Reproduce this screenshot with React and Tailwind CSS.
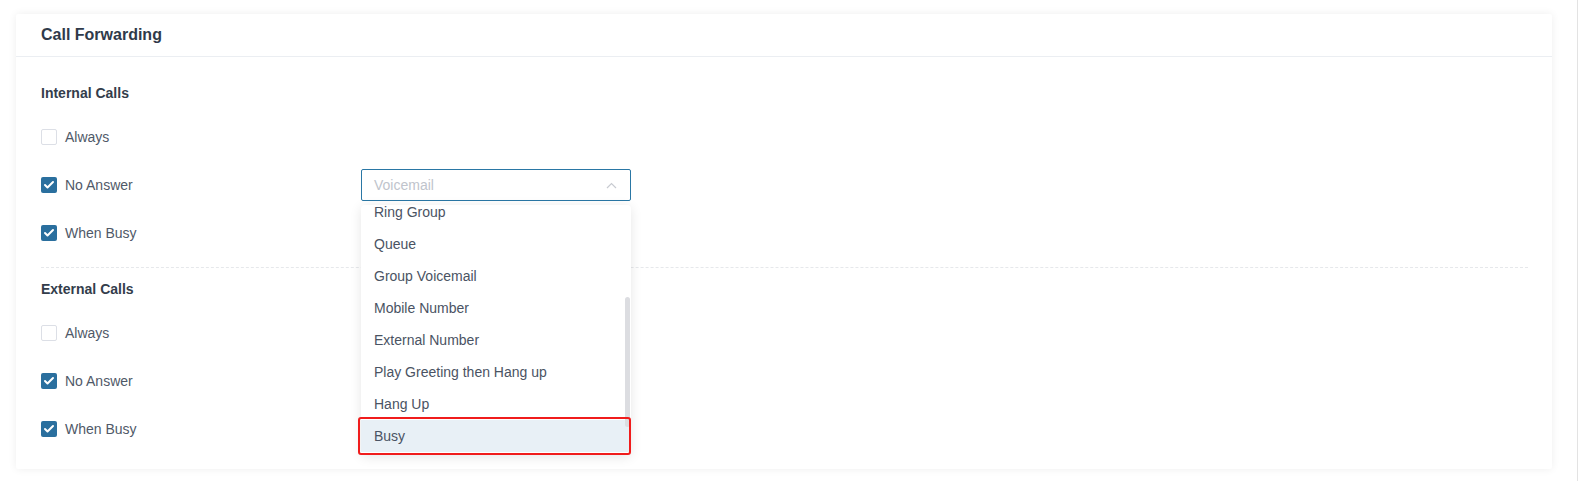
import { Check } from "lucide-react";

const options = [
  "Ring Group",
  "Queue",
  "Group Voicemail",
  "Mobile Number",
  "External Number",
  "Play Greeting then Hang up",
  "Hang Up",
  "Busy",
];

function Checkbox({ checked }) {
  return checked ? (
    <span className="w-4 h-4 rounded-[2px] bg-[#2a6f9e] flex items-center justify-center shrink-0">
      <Check className="w-3 h-3 text-white" strokeWidth={4} />
    </span>
  ) : (
    <span className="w-4 h-4 rounded-[2px] border border-[#dcdfe6] bg-white shrink-0" />
  );
}

function OptionRow({ label, checked, children }) {
  return (
    <div className="grid grid-cols-[320px_270px] h-8 items-center">
      <label className="flex items-center gap-2 text-[14px] text-[#4f5968]">
        <Checkbox checked={checked} />
        <span>{label}</span>
      </label>
      {children}
    </div>
  );
}

function SelectOpen() {
  return (
    <div className="relative h-8">
      <div className="h-8 border border-[#2a77a5] rounded-[2px] bg-white flex items-center justify-between pl-3 pr-3">
        <span className="text-[14px] text-[#c0c4cc]">Voicemail</span>
        <svg width="11" height="7" viewBox="0 0 11 7" className="mr-[1px]">
          <path d="M1 6 L5.5 1.5 L10 6" fill="none" stroke="#c8cbd1" strokeWidth="1.2" />
        </svg>
      </div>

      {/* dropdown panel, scrolled to the bottom */}
      <div className="absolute left-0 top-[36px] w-[270px] h-[250px] bg-white rounded-[4px] shadow-[0_2px_12px_rgba(0,0,0,0.1)] overflow-hidden z-10">
        <ul className="-mt-[9px]">
          {options.map((o) => (
            <li
              key={o}
              className={`h-8 flex items-center pl-[13px] text-[14px] text-[#4a5363] ${
                o === "Busy" ? "bg-[#e8f0f6]" : ""
              }`}
            >
              {o}
            </li>
          ))}
        </ul>
        <div className="absolute right-[1px] top-[92px] w-[5px] h-[130px] rounded-full bg-[#dcdde1]" />
      </div>

      {/* red highlight annotation */}
      <div className="absolute left-[-3px] top-[248px] w-[273px] h-[38px] border-2 border-[#f01c1c] rounded-[3px] z-20" />
    </div>
  );
}

function Section({ title, select }) {
  return (
    <div>
      <div className="h-5 flex items-center text-[14px] font-bold text-[#333d4b]">{title}</div>
      <div className="mt-[18px] flex flex-col gap-4">
        <OptionRow label="Always" checked={false} />
        <OptionRow label="No Answer" checked>
          {select ? <SelectOpen /> : null}
        </OptionRow>
        <OptionRow label="When Busy" checked />
      </div>
    </div>
  );
}

export default function App() {
  return (
    <div
      className="w-full h-[481px] bg-white pt-[14px] pl-4 border-r border-[#e3e3e3]"
      style={{ fontFamily: '"Liberation Sans", Arial, sans-serif' }}
    >
      <div className="w-[1536px] bg-white rounded-[2px] shadow-[0_0_8px_rgba(0,0,0,0.07)]">
        <div className="h-[43px] flex items-center px-[25px] border-b border-[#ebeef2]">
          <h2 className="text-[16px] font-bold text-[#2f3a4a]">Call Forwarding</h2>
        </div>
        <div className="pt-[26px] pb-[24px] pl-[25px] pr-6">
          <Section title="Internal Calls" select />
          <div className="mt-[18px] mb-[11px] border-t border-dashed border-[#e6e8eb]" />
          <Section title="External Calls" />
        </div>
      </div>
    </div>
  );
}
